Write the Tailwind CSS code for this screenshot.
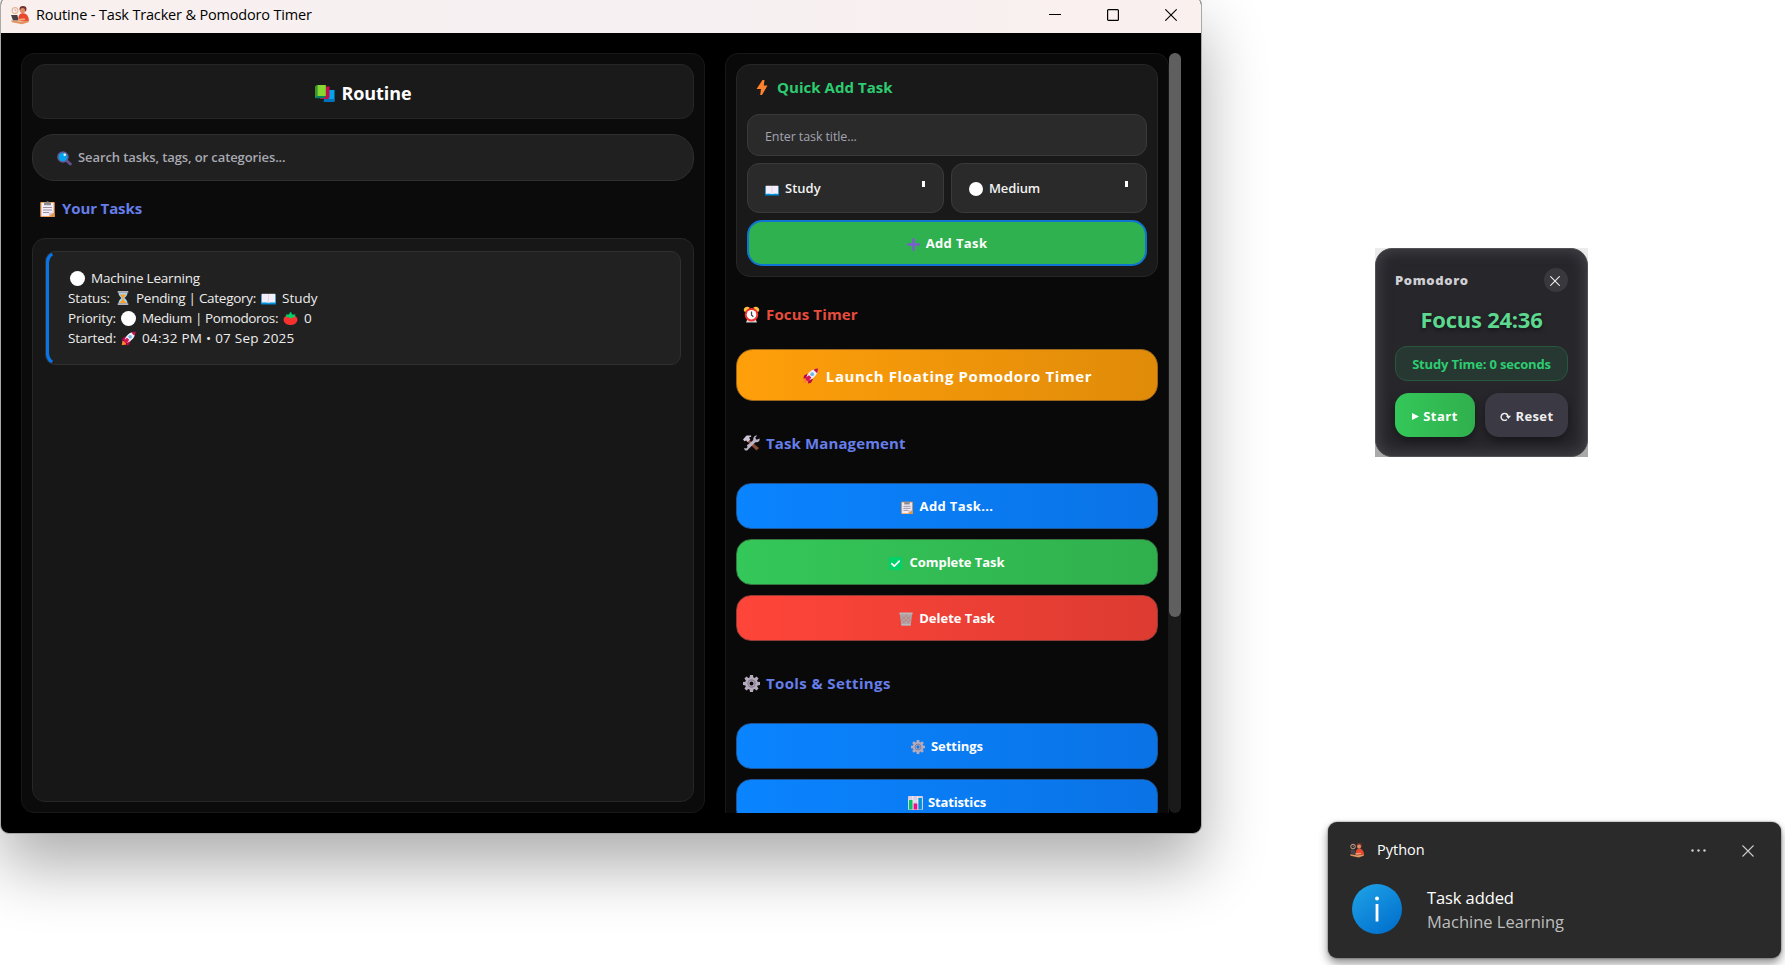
<!DOCTYPE html>
<html lang="en">
<head>
<meta charset="utf-8">
<title>Routine - Task Tracker &amp; Pomodoro Timer</title>
<script src="https://cdn.jsdelivr.net/npm/@tailwindcss/browser@4"></script>
</head>
<body class="relative h-[965px] w-[1785px] overflow-hidden bg-white font-['Open_Sans','Noto_Sans',sans-serif] whitespace-nowrap">

<svg class="hidden">
  <symbol id="person" viewBox="0 0 20 19"><circle cx="5" cy="4.500" r="2.900" fill="none" stroke="#e9b394" stroke-width="1.100"/><path d="M5 3v1.700h1.300" stroke="#c98" fill="none" stroke-width=".7"/><ellipse cx="13" cy="3" rx="3.500" ry="3" fill="#74302a"/><ellipse cx="12.600" cy="4.700" rx="2.500" ry="2.700" fill="#e08c66"/><path d="M8.500 15c-.5-5 .5-7.300 4-7.700 4-.3 6.200 2.700 6.500 7.700z" fill="#e9482f"/><path d="M1 9h6.300l1.400 5.500H3z" fill="#4a3f45"/><path d="M8 13l6.500-.8 1 1.700L8 15z" fill="#f2a679"/><path d="M1 14.300l9 1.200 9-1-.5 1.800-6.500 2-10-2z" fill="#e2935f"/></symbol>
  <symbol id="books" viewBox="0 0 20 17"><path d="M9 5h10.500v11H9z" fill="#00a6ed"/><path d="M9 14h10.500v3H8.500z" fill="#0074ba"/><path d="M5 1.500h9.500V12l-1 2H5z" fill="#ca0b4a"/><path d="M0 1.500L2 0h8.500v11.500l-1 1.800H0z" fill="#008463"/><path d="M2.500 0h8.300v11H2.500z" fill="#86d72f"/><path d="M0 1.500L2 0v11.300l-2 1z" fill="#44911b"/></symbol>
  <symbol id="search" viewBox="0 0 15 15"><path d="M9.500 9.500l3.800 3.500" stroke="#635090" stroke-width="3" stroke-linecap="round"/><circle cx="6" cy="6" r="5" fill="#00a6ed" stroke="#635994" stroke-width="1.600"/><circle cx="7.700" cy="3.700" r="1.200" fill="#fff"/></symbol>
  <symbol id="clip" viewBox="0 0 15 16" preserveAspectRatio="none"><rect x=".3" y="1" width="14.400" height="15" rx=".8" fill="#f0a35a"/><rect x="1.500" y="2" width="12" height="13" fill="#f3eef8"/><path d="M4 1.500h2Q7.500-1 9 1.500h2v2.700H4z" fill="#8c8a91"/><path d="M3 6.500h9M3 9h9M3 11.500h6" stroke="#998ea4" stroke-width="1.200"/><path d="M9.500 16v-4H14l.7.500V16z" fill="#e19747"/><path d="M9.500 15v-3.300h4z" fill="#d3c4e0"/></symbol>
  <symbol id="hour" viewBox="0 0 12 14"><path d="M1.500 1.500h9c0 3-1.500 4-3 5.500 1.500 1.500 3 2.500 3 5.500h-9c0-3 1.500-4 3-5.500-1.500-1.500-3-2.500-3-5.500z" fill="#a9d4ee"/><path d="M2.800 3.500h6.400L6.500 6.700V8.500l3 3.500h-7l3-3.500V6.700z" fill="#ff9f22"/><path d="M.7 0h10.600v1.700H.7zM.7 12.300h10.600V14H.7z" fill="#b6b3bd"/></symbol>
  <symbol id="book" viewBox="0 0 15 12"><path d="M0 1.500h15v10H0z" fill="#0084ce"/><path d="M.7.800h13.600v9H.7z" fill="#f4edfa"/><path d="M7.500 1.200v8.600" stroke="#dccfe6" stroke-width=".8"/><path d="M1 10q4-.6 6.500.5 2.500-1.100 6.500-.5" fill="none" stroke="#00a6ed" stroke-width=".8"/></symbol>
  <symbol id="tomato" viewBox="0 0 15 13"><ellipse cx="7.500" cy="7.700" rx="7" ry="5.200" fill="#f8312f"/><path d="M2.500 2.500L6 2.600 7 .2h1.200l.6 2.400 4-.2-1.500 1.900 1.400 1.200-3-.3L7.500 6.500 5.300 5l-3 .6 1.500-1.500z" fill="#00d26a"/></symbol>
  <symbol id="rocket" viewBox="0 0 16 16"><path d="M1.500 10.500L.8 15.300l5-1-1-3z" fill="#ff822d"/><path d="M5 5.500l-3.300 2L.8 10.500 5 10zM10.500 11l-2 3.700-3 .8L6 11.500z" fill="#b4064a"/><path d="M3.800 9.500C5.300 4.500 9.500 1 14.300 1c.7 0 .9.300.8 1-.3 5-3.800 8.500-8.600 10.400z" fill="#f4edfa"/><path d="M11 1.700C12.500.9 14 .5 15.500.5c0 1.500-.3 3-1.200 4.500z" fill="#ca0b4a"/><circle cx="9.700" cy="6.200" r="1.900" fill="#6fb9dd"/><path d="M3.400 9.500L6.500 7.200 8.800 9.500l-2.300 2.900-1.700.6-1.500-1.700z" fill="#d8144e"/></symbol>
  <symbol id="bolt" viewBox="0 0 12 15"><path d="M6.500 0L8.500 0 7.800 5.500h3.700L6 15H4.200l.8-6H.5z" fill="#ff822d"/></symbol>
  <symbol id="plus" viewBox="0 0 13 13"><path d="M6.500 1.200v10.600M1.200 6.500h10.600" stroke="#7d5bd0" stroke-width="2.400" stroke-linecap="round"/></symbol>
  <symbol id="alarm" viewBox="0 0 17 17"><path d="M3 16.500l1-2.500h9l1 2.500z" fill="#d3d3d3"/><path d="M.7 4.300C.7 1 4.500-.5 6.800 1.800L2 6.200zM16.300 4.300C16.300 1 12.500-.5 10.200 1.800L15 6.200z" fill="#fcc23a"/><circle cx="8.500" cy="8.700" r="6.800" fill="#f8312f"/><circle cx="8.500" cy="8.700" r="4.800" fill="#fff"/><path d="M8.500 5.500v3.500l1.800 1.700" stroke="#444" stroke-width="1.300" fill="none"/></symbol>
  <symbol id="tools" viewBox="0 0 17 16"><path d="M5 4l11 9-2.500 2.500L3.500 6z" fill="#8b4a36"/><path d="M0 4.500L3.500.5l4.500 0 .3 1.200L6 2.500l1.300 2L4.800 7 3.200 5.400 1.500 6.200z" fill="#cdc4d6"/><path d="M16.700 3.500c.3 3-2 4.300-4.200 3.700L5.500 14c-1.500 2.700-4.700 1.700-4.200-1l2 .6 1.300-1.600-.8-1.700C5.500 9.500 7 8 10.300 5 9.700 2 12 0 14.200.5l-2 2.300 1.300 2z" fill="#bdb3c6"/></symbol>
  <symbol id="check" viewBox="0 0 14 14"><rect width="14" height="14" rx="1.500" fill="#00d26a"/><path d="M3 7.200l2.700 2.700L11 4.500" fill="none" stroke="#fff" stroke-width="1.800" stroke-linecap="round" stroke-linejoin="round"/></symbol>
  <symbol id="trash" viewBox="0 0 15 14"><path d="M1 2h13l-1.500 12h-10z" fill="#a9a7ab"/><path d="M3 4l9 8M7 3.500l5.500 5M2.500 8l5 5M12 4l-9 8M8 3.500l-5.500 5M12.500 8l-5 5" stroke="#e75b4c" stroke-width=".9" stroke-dasharray="1 1"/><path d="M.5 0h14v2.300H.5zM2.400 12h10.200l-.3 2H2.700z" fill="#b9b6bc"/></symbol>
  <symbol id="gear" viewBox="0 0 17 17"><path d="M7 0h3l.4 2.400 1.200.5L13.500 1.500l2.100 2.100-1.500 1.900.5 1.200L17 7v3l-2.400.4-.5 1.200 1.500 1.900-2.100 2.100-1.900-1.500-1.200.5L10 17H7l-.4-2.400-1.200-.5-1.900 1.500-2.100-2.100 1.500-1.900-.5-1.200L0 10V7l2.400-.3.500-1.200L1.400 3.600l2.100-2.100 1.900 1.400 1.200-.5zM8.500 6.500a2 2 0 1 0 0 4 2 2 0 1 0 0-4z" fill-rule="evenodd" fill="#b4acbc"/><circle cx="8.500" cy="8.500" r="3.600" fill="none" stroke="#85798f" stroke-width="1.100"/></symbol>
  <symbol id="chart" viewBox="0 0 15 14"><rect width="15" height="14" rx="1" fill="#d9cde2"/><path d="M4.800 0v8M9.800 0v8M0 5h15" stroke="#f6f0fa" stroke-width=".8"/><path d="M1 4h3.500v9.500H1z" fill="#00c565"/><path d="M5.700 7.500h3.500v6H5.700z" fill="#f70a8d"/><path d="M10.400 2h3.500v11.500h-3.500z" fill="#0092d8"/></symbol>
</svg>

<!-- Main window -->
<main class="absolute top-[-4px] left-0 flex h-[838px] w-[1202px] flex-col overflow-hidden rounded-[9px] border border-[#a9a9a9] bg-black shadow-[0_32px_64px_rgba(0,0,0,0.32)]">
  <header class="flex h-[36px] shrink-0 items-center bg-linear-to-r from-[#f9f0ee] via-[#f6f0f3] to-[#faf0ee] pl-[9px] text-[14.5px] tracking-[-0.17px] text-black">
    <svg class="h-[19px] w-5"><use href="#person"/></svg>
    <span class="ml-[6px]">Routine - Task Tracker &amp; Pomodoro Timer</span>
    <div class="ml-auto flex items-center pr-[24px] pb-px">
      <svg class="mr-[46px] h-3 w-3" viewBox="0 0 12 12"><path d="M0 5.500h12" stroke="#000"/></svg>
      <svg class="mr-[46px] h-3 w-3" viewBox="0 0 12 12"><rect x=".6" y=".6" width="10.800" height="10.800" rx="1" fill="none" stroke="#000" stroke-width="1.200"/></svg>
      <svg class="h-3 w-3" viewBox="0 0 12 12"><path d="M.3.300l11.400 11.400M11.700.3L.3 11.700" stroke="#000" stroke-width="1.100"/></svg>
    </div>
  </header>

  <div class="flex h-[780px] gap-5 pt-5 pl-5">
    <section class="flex h-[760px] w-[684px] flex-col rounded-[13px] border border-[#181818] bg-[#0b0b0b] p-[10px]">
      <div class="flex h-[55px] shrink-0 items-center justify-center gap-[7px] rounded-[13px] border border-[#262626] bg-[#1a1a1a] pt-[3px] text-[18px] font-bold tracking-[-0.09px] text-white">
        <svg class="h-[17px] w-5"><use href="#books"/></svg><span>Routine</span>
      </div>
      <div class="mt-[15px] flex h-[47px] shrink-0 items-center gap-[6px] rounded-[22px] border border-[#2f2f2f] bg-[#202020] pt-px pl-6 text-[13px] font-semibold tracking-[-0.1px] text-[#a9a9b2]">
        <svg class="h-[15px] w-[15px]"><use href="#search"/></svg><span>Search tasks, tags, or categories...</span>
      </div>
      <h2 class="flex h-[57px] shrink-0 items-center gap-[7px] pb-[2px] pl-2 text-[15px] font-bold tracking-[-0.12px] text-[#667eea]">
        <svg class="h-4 w-[15px]"><use href="#clip"/></svg><span>Your Tasks</span>
      </h2>
      <div class="h-[564px] rounded-[13px] border border-[#262626] bg-[#171717] p-3">
        <article class="relative h-[114px] overflow-hidden rounded-[10px] border border-[#303030] bg-[#212121] pt-4 pl-[22px] text-[13.5px] text-[#ededed]">
          <svg class="absolute -top-px -left-px h-[114px] w-2" viewBox="0 0 8 114"><path d="M7 2.500Q2 5.500 2 13v88q0 7.500 5 10.500" fill="none" stroke="#0a73e6" stroke-width="4"/></svg>
          <p class="flex h-5 items-center gap-[6px] pl-[2px] tracking-[-0.2px]"><i class="size-[15px] rounded-full bg-white"></i><span>Machine Learning</span></p>
          <p class="flex h-5 items-center"><span class="w-[41px] tracking-[-0.11px]">Status:</span><svg class="mr-[7px] ml-2 h-[14px] w-3"><use href="#hour"/></svg><span class="w-[119px] tracking-[-0.28px]">Pending | Category:</span><svg class="mx-[6px] mt-[2px] h-3 w-[15px]"><use href="#book"/></svg><span>Study</span></p>
          <p class="flex h-5 items-center"><span class="w-[47px] tracking-[-0.14px]">Priority:</span><i class="mx-[6px] size-[15px] rounded-full bg-white"></i><span class="w-[135px] tracking-[-0.39px]">Medium | Pomodoros:</span><svg class="mx-[6px] h-[13px] w-[15px]"><use href="#tomato"/></svg><span>0</span></p>
          <p class="flex h-5 items-center"><span class="w-[47px] tracking-[-0.18px]">Started:</span><svg class="mx-[6px] h-[15px] w-[15px]"><use href="#rocket"/></svg><span class="tracking-[0.26px]">04:32 PM • 07 Sep 2025</span></p>
        </article>
      </div>
    </section>

    <div class="flex h-[760px] w-[456px] overflow-hidden">
      <section class="h-[900px] w-[444px] shrink-0 rounded-[13px] border border-[#181818] bg-[#090909] p-[10px]">
        <div class="flex h-[213px] flex-col rounded-[14px] border border-[#262626] bg-[#191919] px-[10px]">
          <h2 class="flex h-[49px] shrink-0 items-center gap-[9px] pb-[4px] pl-[9px] text-[15px] font-bold text-[#2ecc71]"><svg class="h-[15px] w-3"><use href="#bolt"/></svg><span class="tracking-[0.05px]">Quick Add Task</span></h2>
          <div class="flex h-[42px] shrink-0 items-center rounded-xl border border-[#3a3a3a] bg-[#2a2a2a] pt-[4px] pl-[17px] text-[12.5px] tracking-[-0.1px] text-[#a3a3b0]">Enter task title...</div>
          <div class="mt-[7px] flex h-[50px] shrink-0 gap-[7px] text-[13px] font-semibold text-[#f2f2f2]">
            <div class="flex w-[197px] items-center rounded-xl border border-[#3a3a3a] bg-[#2a2a2a] pt-px pr-[18px] pl-[17px]"><svg class="mt-[3px] mr-[6px] h-[11px] w-[14px]"><use href="#book"/></svg><span>Study</span><i class="mb-[9px] ml-auto h-[6px] w-[3px] bg-white"></i></div>
            <div class="flex w-[196px] items-center rounded-xl border border-[#3a3a3a] bg-[#2a2a2a] pt-px pr-[18px] pl-[17px]"><i class="mr-[6px] size-[14px] rounded-full bg-white"></i><span class="tracking-[-0.14px]">Medium</span><i class="mb-[9px] ml-auto h-[6px] w-[3px] bg-white"></i></div>
          </div>
          <button class="mt-[7px] flex h-[46px] shrink-0 items-center justify-center gap-[6px] rounded-[15px] border-2 border-[#1074d2] bg-[#30b14f] pt-[2px] text-[13px] font-bold tracking-[0.38px] text-white"><svg class="size-[13px]"><use href="#plus"/></svg><span>Add Task</span></button>
        </div>
        <h2 class="flex h-[72px] items-center gap-[6px] pt-[2px] pl-[7px] text-[15px] font-bold tracking-[0.15px] text-[#e74c3c]"><svg class="size-[17px]"><use href="#alarm"/></svg><span>Focus Timer</span></h2>
        <button class="flex h-[52px] w-full items-center justify-center gap-[7px] rounded-[17px] border border-[#9b661c] bg-linear-to-r from-[#ff9f0a] to-[#e08b09] pt-[2px] text-[15px] font-bold tracking-[0.6px] text-white"><svg class="h-4 w-[17px]"><use href="#rocket"/></svg><span>Launch Floating Pomodoro Timer</span></button>
        <h2 class="flex h-[82px] items-center gap-[6px] pt-[2px] pl-[7px] text-[15px] font-bold tracking-[0.12px] text-[#667eea]"><svg class="h-4 w-[17px]"><use href="#tools"/></svg><span>Task Management</span></h2>
        <div class="flex flex-col gap-[10px] text-[13px] font-bold text-white">
          <button class="flex h-[46px] items-center justify-center gap-[7px] rounded-[15px] border border-[#1e5695] bg-linear-to-r from-[#0a84ff] to-[#0a73e6] pt-[2px]"><svg class="h-[13px] w-[12px]"><use href="#clip"/></svg><span class="tracking-[0.36px]">Add Task...</span></button>
          <button class="flex h-[46px] items-center justify-center gap-[7px] rounded-[15px] border border-[#33773f] bg-linear-to-r from-[#34c759] to-[#30b04d] pt-[2px]"><svg class="size-[13px]"><use href="#check"/></svg><span class="tracking-[-0.04px]">Complete Task</span></button>
          <button class="flex h-[46px] items-center justify-center gap-[6px] rounded-[15px] border border-[#8f3c36] bg-linear-to-r from-[#ff453a] to-[#dd3b31] pt-[2px]"><svg class="h-[14px] w-[14px]"><use href="#trash"/></svg><span>Delete Task</span></button>
        </div>
        <h2 class="flex h-[82px] items-center gap-[6px] pt-[3px] pl-[7px] text-[15px] font-bold tracking-[0.37px] text-[#667eea]"><svg class="size-[17px]"><use href="#gear"/></svg><span>Tools &amp; Settings</span></h2>
        <div class="flex flex-col gap-[10px] text-[13px] font-bold text-white">
          <button class="flex h-[46px] items-center justify-center gap-[6px] rounded-[15px] border border-[#1e5695] bg-linear-to-r from-[#0a84ff] to-[#0a73e6] pt-[2px]"><svg class="size-[14px]"><use href="#gear"/></svg><span class="tracking-[-0.06px]">Settings</span></button>
          <button class="flex h-[46px] items-center justify-center gap-[5px] rounded-[15px] border border-[#1e5695] bg-linear-to-r from-[#0a84ff] to-[#0a73e6] pt-[2px]"><svg class="h-[14px] w-[15px]"><use href="#chart"/></svg><span class="tracking-[-0.15px]">Statistics</span></button>
        </div>
      </section>
      <div class="h-[760px] w-3 rounded-[6px] bg-[#1a1a1a]"><div class="h-[564px] rounded-[6px] bg-[#5f5f5f]"></div></div>
    </div>
  </div>
</main>

<!-- Floating timer -->
<aside class="absolute top-[248px] left-[1375px] h-[209px] w-[213px] bg-linear-to-b from-[#ececec] to-[#a8a8a8]">
  <div class="flex h-full flex-col rounded-[17px] border border-[#515156] bg-[#27262b] px-[19px] pt-[19px] shadow-[inset_0_0_14px_2px_rgba(110,110,116,0.4)]">
    <div class="flex h-6 items-center justify-between text-[13px] font-extrabold tracking-[0.62px] text-[#cfcfd4]"><span class="pt-[2px]">Pomodoro</span><i class="flex size-6 items-center justify-center rounded-full bg-[#39383d]"><svg class="mt-[2px] mr-[2px] size-[10px]" viewBox="0 0 10 10"><path d="M.3.300l9.400 9.400M9.700.3L.3 9.700" stroke="#eee" stroke-width="1.100"/></svg></i></div>
    <div class="flex h-[54px] items-center justify-center text-[22px] font-bold tracking-[-0.25px] text-[#5cd88f] text-shadow-[0_2px_4px_rgba(0,0,0,0.5)]">Focus 24:36</div>
    <div class="flex h-[35px] items-center justify-center rounded-xl border border-[#27573e] bg-[#263831] pt-[2px] text-[13px] font-bold tracking-[-0.17px] text-[#2ecc71]">Study Time: 0 seconds</div>
    <div class="mt-3 flex h-11 gap-[10px] text-[13px] font-bold text-white">
      <button class="flex w-20 items-center justify-center gap-1 rounded-[14px] bg-linear-to-r from-[#34c759] to-[#30b04d] pt-[3px] shadow-[0_4px_8px_rgba(0,0,0,0.4)]"><svg class="h-[7px] w-[7px]" viewBox="0 0 7 7"><path d="M0 0l7 3.500L0 7z" fill="#fff"/></svg><span class="tracking-[0.5px]">Start</span></button>
      <button class="flex w-[83px] items-center justify-center gap-[5px] rounded-[14px] bg-[#3a3944] pt-[3px] text-[#eee] shadow-[0_4px_8px_rgba(0,0,0,0.4)]"><svg class="h-[9px] w-[11px]" viewBox="0 0 11 9"><path d="M7 7.500A3.500 3.500 0 1 1 8 4" fill="none" stroke="#eee" stroke-width="1.400"/><path d="M5.800 3.700h5.200L8.400 7z" fill="#eee"/></svg><span class="tracking-[0.35px]">Reset</span></button>
    </div>
  </div>
</aside>

<!-- Toast notification -->
<aside class="absolute top-[822px] left-[1328px] flex h-[136px] w-[453px] flex-col rounded-[9px] bg-[#2a2a2a] shadow-[0_0_2px_rgba(0,0,0,0.6),0_5px_10px_rgba(0,0,0,0.45)]">
  <div class="flex h-[57px] items-center pl-[21px] text-[14.5px] text-white">
    <svg class="h-[15px] w-4"><use href="#person"/></svg><span class="ml-3 pb-[2px]">Python</span>
    <svg class="mr-9 ml-auto h-[3px] w-[15px]" viewBox="0 0 15 3"><g fill="#d0d0d0"><circle cx="1.500" cy="1.500" r="1.200"/><circle cx="7.500" cy="1.500" r="1.200"/><circle cx="13.500" cy="1.500" r="1.200"/></g></svg>
    <svg class="mr-[27px] size-3" viewBox="0 0 12 12"><path d="M.5.500l11 11M11.500.5l-11 11" stroke="#ccc" stroke-width="1.100"/></svg>
  </div>
  <div class="flex items-center gap-[25px] pt-[5px] pl-6">
    <svg class="size-[50px]" viewBox="0 0 50 50"><defs><linearGradient id="blue" x1="0" y1="0" x2=".7" y2="1"><stop stop-color="#20a4e8"/><stop offset="1" stop-color="#0272ce"/></linearGradient></defs><circle cx="25" cy="25" r="25" fill="url(#blue)"/><circle cx="25" cy="14.500" r="2" fill="#fff"/><path d="M25 20v17.500" stroke="#fff" stroke-width="2.800"/></svg>
    <div class="pt-[2px] text-[16.5px] leading-6 text-white"><p class="tracking-[-0.1px]">Task added</p><p class="text-[#bebebe]">Machine Learning</p></div>
  </div>
</aside>
</body>
</html>
